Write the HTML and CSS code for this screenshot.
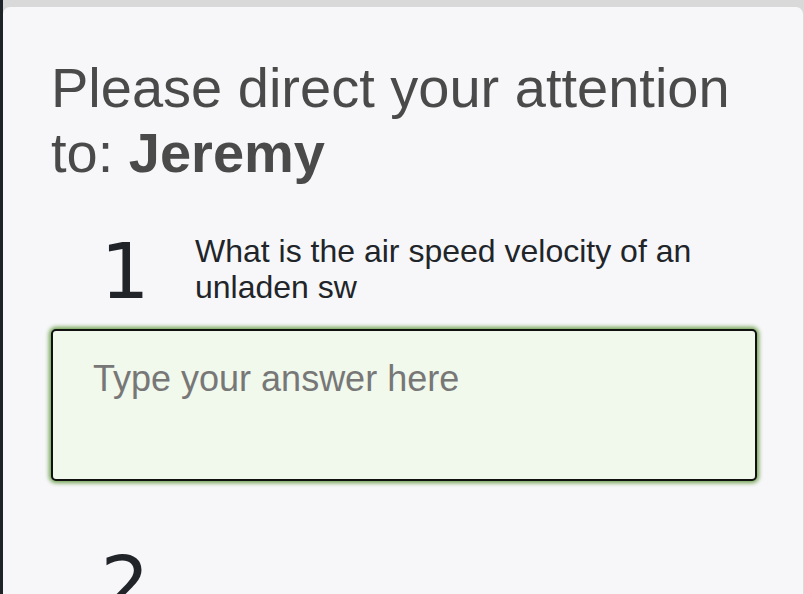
FILE: index.html
```html
<!DOCTYPE html>
<html lang="en">
<head>
<meta charset="utf-8">
<title>Questions</title>
<link rel="stylesheet" href="styles.css">
</head>
<body>
<div class="backdrop">
  <div class="modal">
    <h1 class="title">Please direct your attention to: <strong>Jeremy</strong></h1>
    <div class="item">
      <div class="q-row">
        <div class="q-num">1</div>
        <div class="q-text">What is the air speed velocity of an unladen sw</div>
      </div>
      <textarea class="answer" placeholder="Type your answer here"></textarea>
    </div>
    <div class="item">
      <div class="q-row">
        <div class="q-num">2</div>
        <div class="q-text"></div>
      </div>
    </div>
  </div>
</div>
</body>
</html>
```

FILE: styles.css
```css
html, body {
  margin: 0;
  padding: 0;
  height: 100%;
  overflow: hidden;
}
body {
  background: #1e2428;
  font-family: "Liberation Sans", Arial, sans-serif;
}
.backdrop {
  margin-left: 3px;
  padding-top: 7px;
  background: #d9d9d9;
  height: 100%;
  box-sizing: border-box;
}
.modal {
  margin-right: 1px;
  background: #f7f7f9;
  border-radius: 7px 7px 0 0;
  padding: 48px 46px 0 48px;
  height: 100%;
  box-sizing: border-box;
}
.title {
  margin: 0 0 47px;
  font-size: 56px;
  line-height: 65px;
  font-weight: normal;
  color: #4a4a4a;
}
.title strong {
  font-weight: bold;
}
.item {
  margin-bottom: 64px;
}
.q-row {
  display: flex;
  align-items: flex-start;
  padding-left: 4px;
}
.q-num {
  flex: 0 0 140px;
  text-align: center;
  font-family: "DejaVu Sans", sans-serif;
  font-size: 77px;
  line-height: 80px;
  color: #212529;
}
.q-text {
  flex: 1;
  font-size: 32px;
  line-height: 36px;
  padding-top: 1px;
  color: #212529;
}
.answer {
  display: block;
  width: 100%;
  height: 152px;
  margin-top: 17px;
  box-sizing: border-box;
  padding: 27px 40px;
  border: 2px solid #111;
  border-radius: 5px;
  background: #f1f8ec;
  box-shadow: 0 0 4px 2px #6fa04f;
  font-family: "Liberation Sans", Arial, sans-serif;
  font-size: 36px;
  color: #212529;
  resize: none;
  outline: none;
}
.answer::placeholder {
  color: #777;
  opacity: 1;
}
```
